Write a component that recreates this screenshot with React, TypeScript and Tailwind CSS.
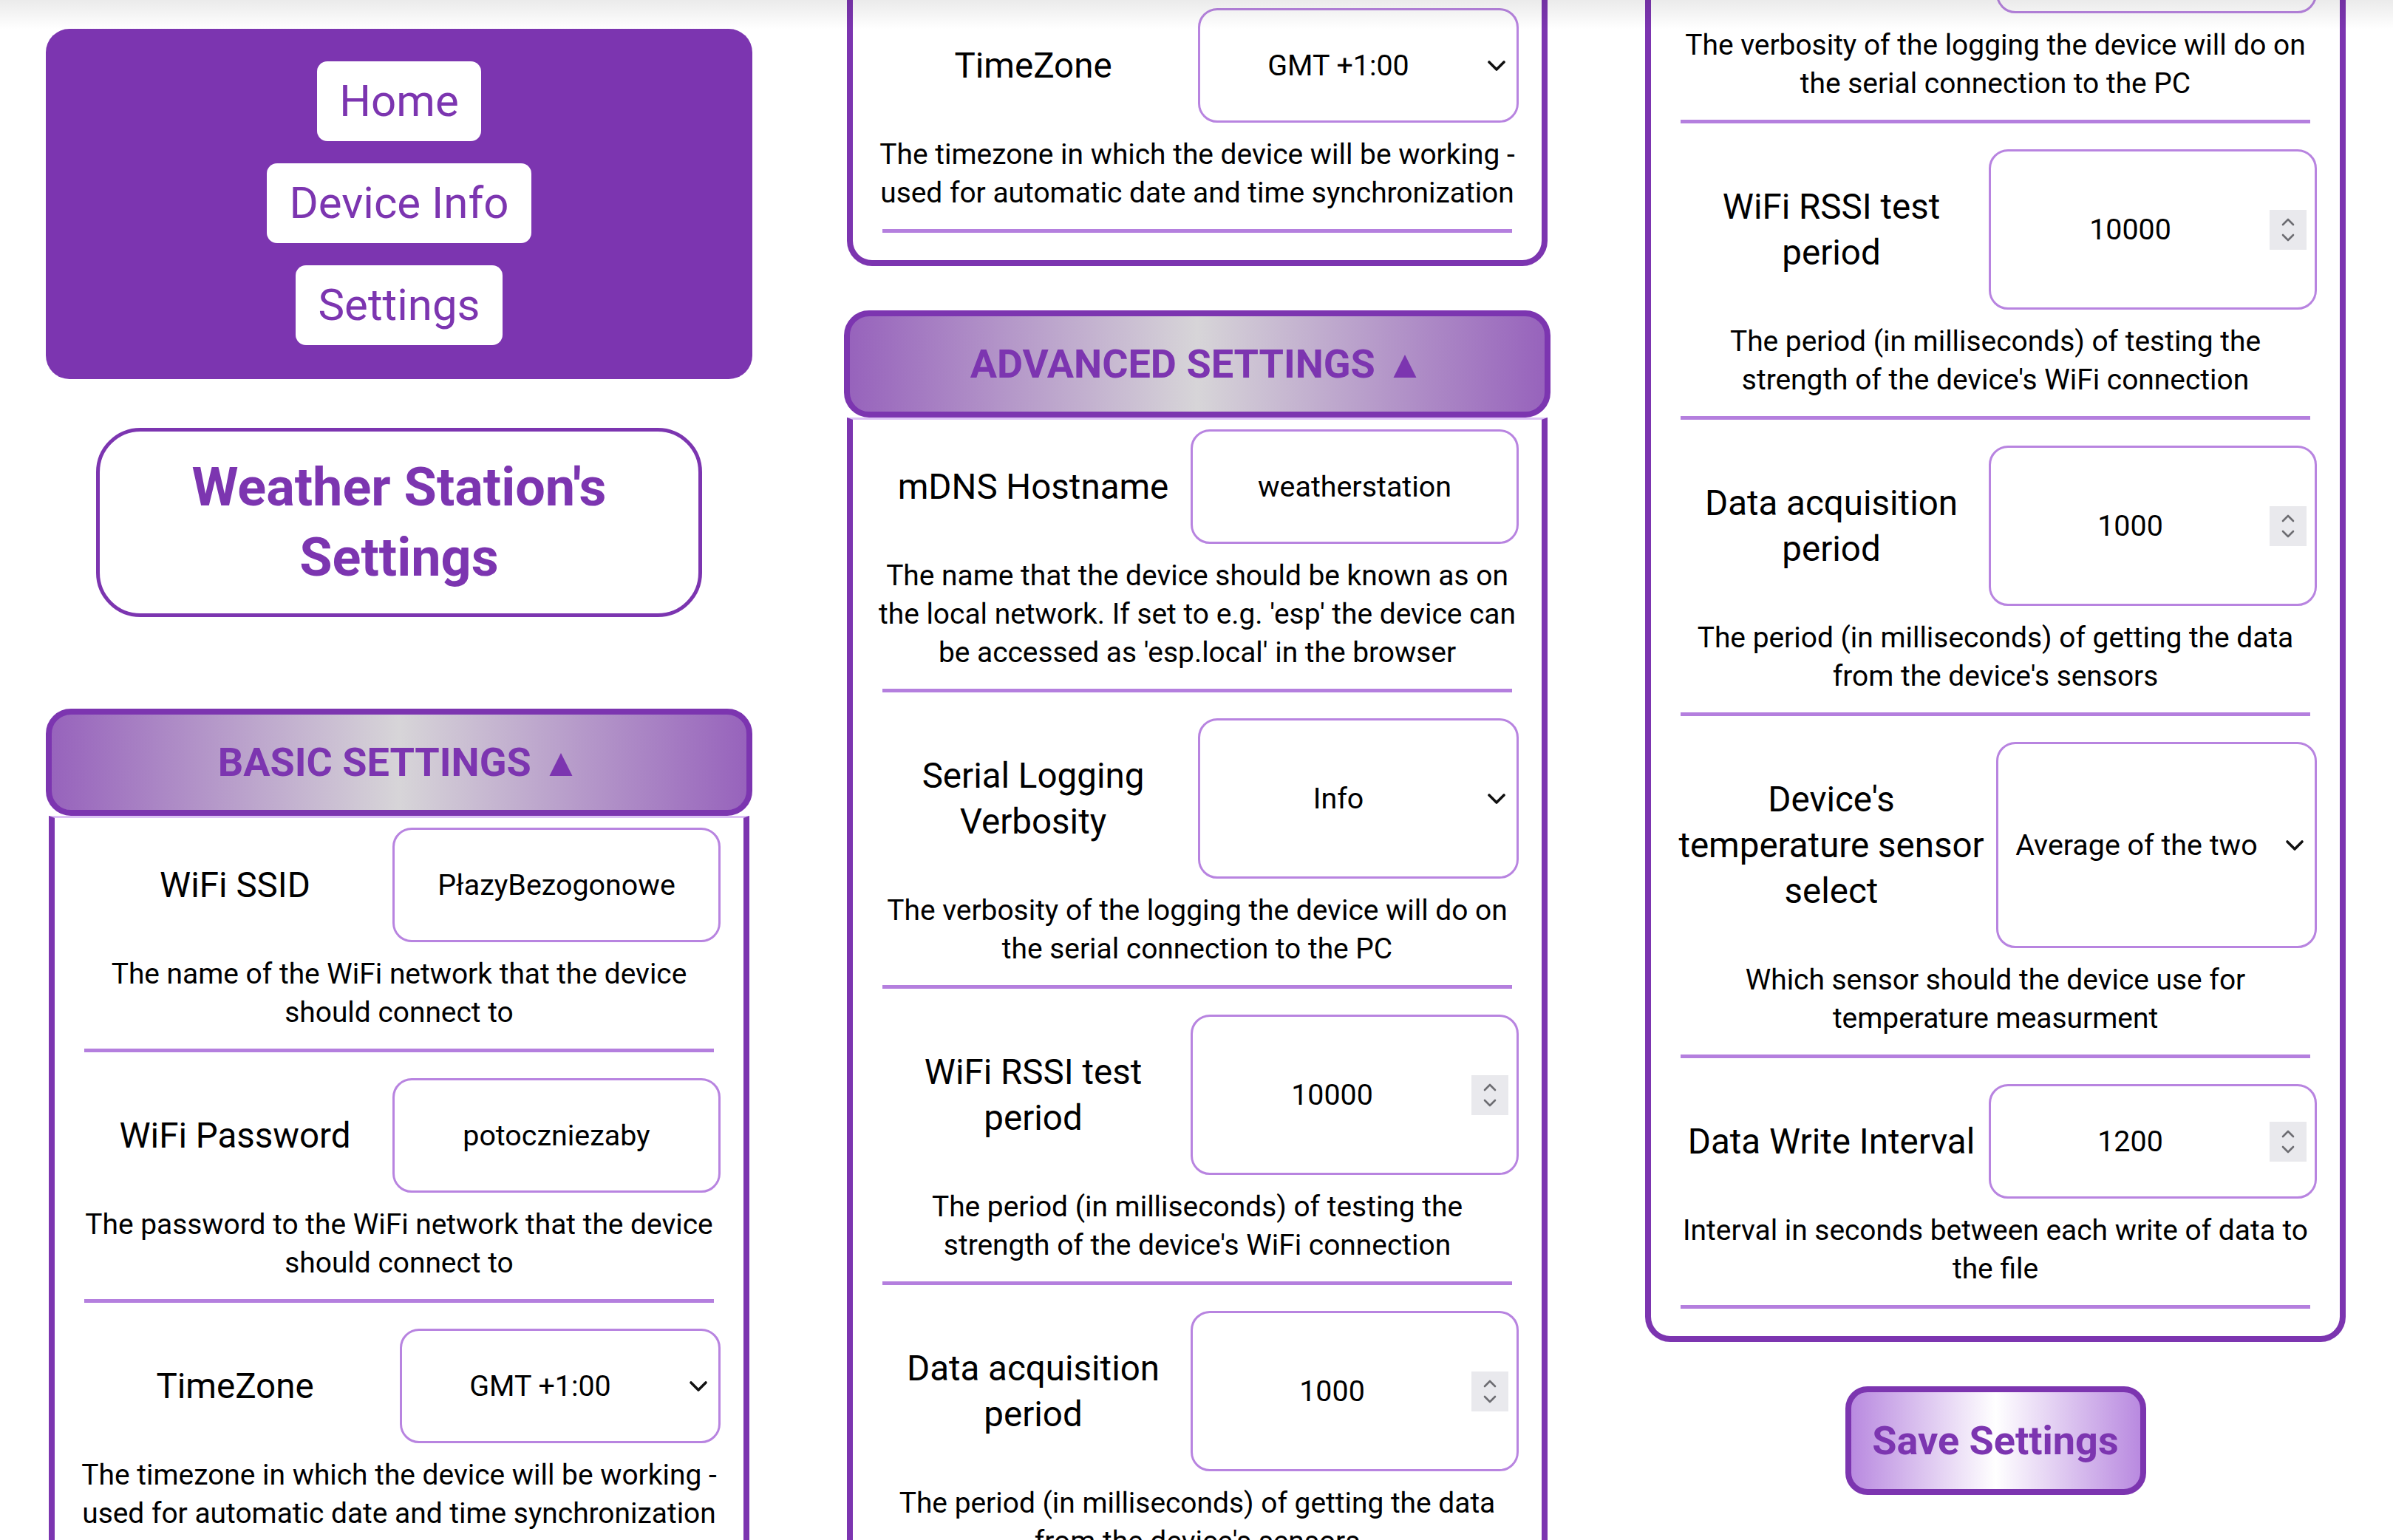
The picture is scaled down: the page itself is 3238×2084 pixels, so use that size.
import React from 'react';

type Kind = 'text' | 'number' | 'select';

type Setting = {
  label: string;
  value: string;
  kind: Kind;
  desc: string;
};

const basicSettings: Setting[] = [
  {
    label: 'WiFi SSID',
    value: 'PłazyBezogonowe',
    kind: 'text',
    desc: 'The name of the WiFi network that the device should connect to',
  },
  {
    label: 'WiFi Password',
    value: 'potoczniezaby',
    kind: 'text',
    desc: 'The password to the WiFi network that the device should connect to',
  },
  {
    label: 'TimeZone',
    value: 'GMT +1:00',
    kind: 'select',
    desc: 'The timezone in which the device will be working - used for automatic date and time synchronization',
  },
];

const advancedSettings: Setting[] = [
  {
    label: 'mDNS Hostname',
    value: 'weatherstation',
    kind: 'text',
    desc: "The name that the device should be known as on the local network. If set to e.g. 'esp' the device can be accessed as 'esp.local' in the browser",
  },
  {
    label: 'Serial Logging Verbosity',
    value: 'Info',
    kind: 'select',
    desc: 'The verbosity of the logging the device will do on the serial connection to the PC',
  },
  {
    label: 'WiFi RSSI test period',
    value: '10000',
    kind: 'number',
    desc: "The period (in milliseconds) of testing the strength of the device's WiFi connection",
  },
  {
    label: 'Data acquisition period',
    value: '1000',
    kind: 'number',
    desc: "The period (in milliseconds) of getting the data from the device's sensors",
  },
  {
    label: "Device's temperature sensor select",
    value: 'Average of the two',
    kind: 'select',
    desc: 'Which sensor should the device use for temperature measurment',
  },
  {
    label: 'Data Write Interval',
    value: '1200',
    kind: 'number',
    desc: 'Interval in seconds between each write of data to the file',
  },
];

const Chevron = () => (
  <svg width="26" height="16" viewBox="0 0 26 16" fill="none" aria-hidden="true">
    <path d="M3 3 L13 13 L23 3" stroke="#111" strokeWidth="3.6" strokeLinecap="round" strokeLinejoin="round" />
  </svg>
);

const Spinner = () => (
  <div className="mr-[11px] flex h-[54px] w-[50px] shrink-0 items-center justify-center bg-[#e9e9ed]">
    <svg width="50" height="54" viewBox="0 0 50 54" fill="none" aria-hidden="true">
      <path d="M18 20 L25 13 L32 20" stroke="#6d6d72" strokeWidth="2.6" strokeLinecap="round" strokeLinejoin="round" />
      <path d="M18 34 L25 41 L32 34" stroke="#6d6d72" strokeWidth="2.6" strokeLinecap="round" strokeLinejoin="round" />
    </svg>
  </div>
);

const Control: React.FC<{ kind: Kind; value: string }> = ({ kind, value }) => {
  if (kind === 'select') {
    return (
      <div className="ml-[10px] flex w-[434px] shrink-0 items-center rounded-[26px] border-[3px] border-[#b884e0] bg-white">
        <span className="flex-1 text-center text-[39.4px] text-black">{value}</span>
        <span className="flex w-[54px] shrink-0 justify-center">
          <Chevron />
        </span>
      </div>
    );
  }
  if (kind === 'number') {
    return (
      <div className="flex w-[444px] shrink-0 items-center rounded-[26px] border-[3px] border-[#b884e0] bg-white">
        <span className="flex-1 text-center text-[39.4px] text-black">{value}</span>
        <Spinner />
      </div>
    );
  }
  return (
    <div className="flex w-[444px] shrink-0 items-center justify-center rounded-[26px] border-[3px] border-[#b884e0] bg-white">
      <span className="text-center text-[39.4px] text-black">{value}</span>
    </div>
  );
};

const SettingRow: React.FC<{ setting: Setting; first: boolean }> = ({ setting, first }) => (
  <div className={first ? '' : 'mt-[35px]'}>
    <div className="flex items-stretch">
      <div className="flex w-[426px] shrink-0 items-center justify-center py-[46.5px] text-center text-[47.5px] leading-[62px] text-black">
        {setting.label}
      </div>
      <Control kind={setting.kind} value={setting.value} />
    </div>
    <p className="mx-[2px] mt-[17px] text-center text-[38.9px] leading-[52px] text-black">{setting.desc}</p>
    <div className="mx-[9px] mt-[23px] h-[5px] bg-[#b47fde]" />
  </div>
);

const Section: React.FC<{ title: string; settings: Setting[]; className?: string }> = ({
  title,
  settings,
  className,
}) => (
  <section className={className}>
    <div className="flex h-[145px] items-center justify-center rounded-[34px] border-[8px] border-[#7c35b0] bg-[linear-gradient(90deg,#9763bc_0%,#d7d5d8_50%,#9763bc_100%)]">
      <span className="text-[54px] font-bold text-[#7c35b0]">
        {title}
        <span className="ml-[14px] text-[53px]">▲</span>
      </span>
    </div>
    <div className="mx-[4px] rounded-b-[34px] border-x-[8px] border-b-[8px] border-t-[3px] border-[#7c35b0] border-t-[#dcc2f5] px-[31px] pb-[37px] pt-[13px]">
      {settings.map((s, i) => (
        <SettingRow key={s.label} setting={s} first={i === 0} />
      ))}
    </div>
  </section>
);

const SettingsPage = () => (
  <div className="w-[1080px] px-[62px] pt-[39px] pb-[200px]">
    {/* Navigation */}
    <nav className="flex flex-col items-center gap-[30px] rounded-[32px] bg-[#7c35b0] pb-[46px] pt-[44px]">
      {['Home', 'Device Info', 'Settings'].map((item) => (
        <a
          key={item}
          href="#"
          className="rounded-[14px] bg-white px-[30px] py-[18px] text-[60px] leading-[72px] text-[#7c35b0]"
        >
          {item}
        </a>
      ))}
    </nav>

    {/* Page title */}
    <div className="mx-[68px] mt-[66px] rounded-[60px] border-[5px] border-[#7c35b0] py-[28px] text-center">
      <h1 className="text-[72px] font-bold leading-[95px] text-[#7c35b0]">
        Weather Station's
        <br />
        Settings
      </h1>
    </div>

    <Section title="BASIC SETTINGS" settings={basicSettings} className="mt-[124px]" />
    <Section title="ADVANCED SETTINGS" settings={advancedSettings} className="mt-[60px]" />

    <div className="mt-[60px] flex justify-center">
      <button className="flex h-[147px] w-[407px] items-center justify-center rounded-[30px] border-[8px] border-[#7c35b0] bg-[linear-gradient(90deg,#b98ae0_0%,#ffffff_50%,#b98ae0_100%)] text-[54px] font-bold text-[#7c35b0]">
        Save Settings
      </button>
    </div>
  </div>
);

// one phone viewport, scrolled to a given offset
const Viewport: React.FC<{ scroll: string; width: string }> = ({ scroll, width }) => (
  <div className={`relative h-[2084px] shrink-0 overflow-hidden bg-white ${width}`}>
    <div className={scroll}>
      <SettingsPage />
    </div>
    <div className="pointer-events-none absolute inset-x-0 top-0 h-[40px] bg-gradient-to-b from-black/[0.08] to-transparent" />
  </div>
);

export default function App() {
  return (
    <div className="flex h-[2084px] w-[3238px] overflow-hidden bg-white font-['Roboto',sans-serif]">
      <Viewport scroll="mt-0" width="w-[1080px]" />
      <Viewport scroll="-mt-[1787px]" width="w-[1080px]" />
      <Viewport scroll="-mt-[2958px]" width="w-[1078px]" />
    </div>
  );
}
